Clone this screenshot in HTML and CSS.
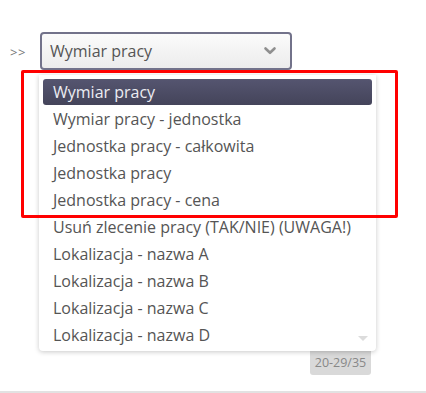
FILE: index.html
```html
<!DOCTYPE html>
<html lang="pl">

<head>
  <meta charset="UTF-8">
  <title>Wymiar pracy</title>
  <link rel="stylesheet" href="styles.css">
</head>

<body>
  <div class="page">
    <div class="fieldRow">
      <span class="arrows">&gt;&gt;</span>
      <div class="picker">
        <div class="selectBox">
          <span class="selectText">Wymiar pracy</span>
          <svg class="chevron" width="14" height="10" viewBox="0 0 14 10">
            <path d="M2.5 2.5 L7 6.8 L11.5 2.5" fill="none" stroke="#8f8f8f" stroke-width="2.6" stroke-linecap="round" stroke-linejoin="round"/>
          </svg>
        </div>
        <div class="dropdown">
          <ul class="options">
            <li class="active">Wymiar pracy</li>
            <li>Wymiar pracy - jednostka</li>
            <li>Jednostka pracy - całkowita</li>
            <li>Jednostka pracy</li>
            <li>Jednostka pracy - cena</li>
            <li>Usuń zlecenie pracy (TAK/NIE) (UWAGA!)</li>
            <li>Lokalizacja - nazwa A</li>
            <li>Lokalizacja - nazwa B</li>
            <li>Lokalizacja - nazwa C</li>
            <li>Lokalizacja - nazwa D</li>
          </ul>
          <span class="scrollDown"></span>
        </div>
        <div class="counterBar">
          <span class="counter">20-29/35</span>
        </div>
      </div>
    </div>
    <div class="divider"></div>
  </div>

  <!-- zaznaczenie -->
  <div class="highlightBox"></div>
</body>

</html>
```

FILE: styles.css
```css
body {
  margin: 0;
  background: #fff;
  font-family: "Open Sans", "Noto Sans", sans-serif;
  color: #555;
}

.page {
  width: 426px;
  height: 393px;
  display: flex;
  flex-direction: column;
}

.fieldRow {
  display: flex;
  padding-top: 32px;
  height: 358px;
}

.arrows {
  width: 29px;
  padding-left: 10px;
  padding-top: 11px;
  font-size: 13px;
  color: #777;
  letter-spacing: 0.5px;
}

.picker {
  display: flex;
  flex-direction: column;
  width: 337px;
}

.selectBox {
  box-sizing: border-box;
  width: 252px;
  height: 38px;
  margin-left: 1px;
  border: 2px solid #72728a;
  border-radius: 4px;
  background: linear-gradient(#fbfbfb, #ececec);
  display: flex;
  align-items: center;
  justify-content: space-between;
  padding: 0 13px 0 8px;
}

.selectText {
  font-size: 16px;
  color: #555;
}

.dropdown {
  position: relative;
  margin-top: 5px;
  box-sizing: border-box;
  width: 337px;
  padding: 4px 4px 2px;
  background: #fff;
  border-radius: 0 0 4px 4px;
  box-shadow: 0 1px 5px rgba(0, 0, 0, 0.22);
}

.options {
  list-style: none;
  margin: 0;
  padding: 0;
}

.options li {
  height: 27px;
  line-height: 27px;
  padding-left: 10px;
  font-size: 16px;
  color: #555;
  white-space: nowrap;
}

.options li.active {
  height: 26px;
  line-height: 26px;
  margin-bottom: 1px;
  border-radius: 3px;
  background: linear-gradient(#555570, #44445a);
  color: #ececf2;
}

.scrollDown {
  position: absolute;
  right: 8px;
  bottom: 10px;
  width: 0;
  height: 0;
  border-left: 5px solid transparent;
  border-right: 5px solid transparent;
  border-top: 5px solid #dcdcdc;
}

.counterBar {
  display: flex;
  justify-content: flex-end;
  padding-right: 5px;
}

.counter {
  width: 61px;
  height: 24px;
  line-height: 24px;
  text-align: center;
  font-size: 12.5px;
  color: #888;
  background: #d9d9d9;
  border-radius: 0 0 3px 3px;
}

.divider {
  height: 2px;
  margin-top: 1px;
  background: #e2e2e2;
}

.highlightBox {
  position: absolute;
  left: 21px;
  top: 70px;
  width: 371px;
  height: 142px;
  border: 3px solid #f00;
  border-radius: 2px;
}
```
